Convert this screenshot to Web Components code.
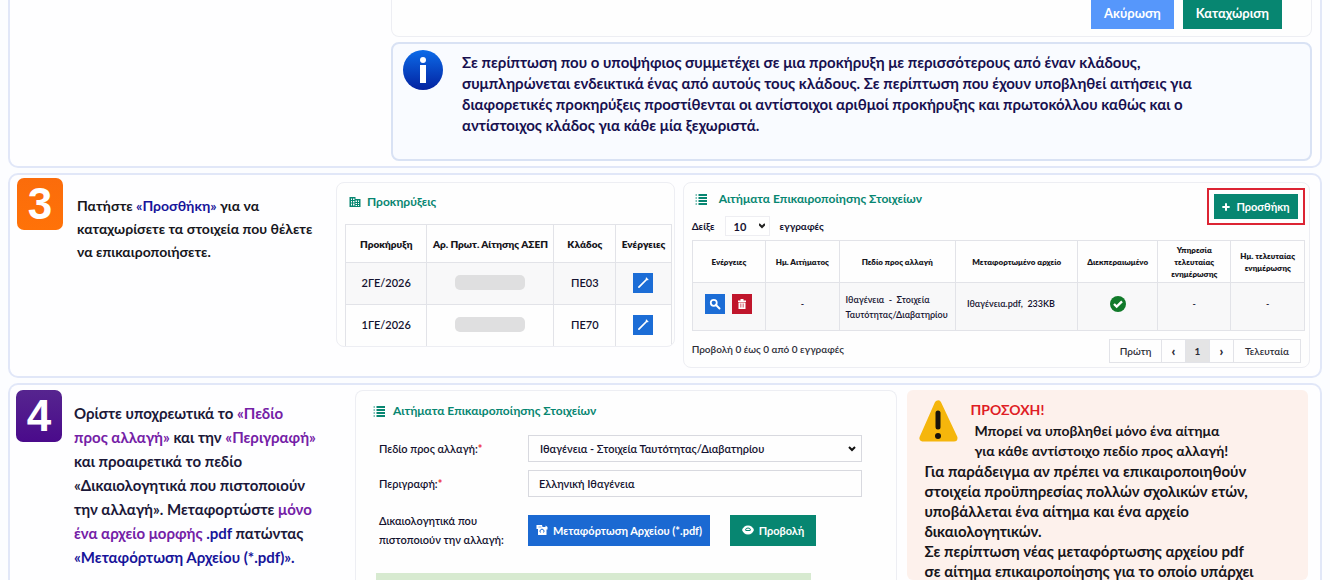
<!DOCTYPE html>
<html lang="el">
<head>
<meta charset="utf-8">
<meta name="viewport" content="width=device-width, initial-scale=1">
<title>Οδηγίες επικαιροποίησης στοιχείων</title>
<style>
  html, body { margin: 0; height: 100%; }
  body {
    overflow: hidden;
    background: #fcfdff;
    color: #14122f;
    font-family: Lato, "Noto Sans", sans-serif;
    font-size: 13px;
    --green: #078671;
    --blue: #1b69d2;
    --line: #e2e3e8;
  }
</style>
</head>
<body>
<guide-page></guide-page>

<script>
const base = `*, *::before { box-sizing: border-box; } svg { display: block; flex: none; }
button, input, select { font: inherit; color: inherit; margin: 0; }`;

const icons = {
  wand: '<path d="M5 19L18 6" stroke="currentColor" stroke-width="3" stroke-linecap="round" fill="none"/><path d="M17 3l4 4" stroke="currentColor" stroke-width="2"/>',
  search: '<circle cx="9.500" cy="9.500" r="6" fill="none" stroke="currentColor" stroke-width="3.500"/><path d="M14 14l7 7" stroke="currentColor" stroke-width="4" stroke-linecap="round"/>',
  trash: '<path d="M4 5h5V2h6v3h5v3H4zM5 9h14v13H5z" fill="currentColor"/><path d="M9 11v8M12 11v8M15 11v8" stroke="#c0162c" stroke-width="1"/>',
  plus: '<path d="M12 1v22M1 12h22" stroke="currentColor" stroke-width="6"/>',
  list: '<path d="M7 4h17M7 10h17M7 16h17M7 22h17" stroke="currentColor" stroke-width="4"/><path d="M1 4h3M1 10h3M1 16h3M1 22h3" stroke="currentColor" stroke-width="2"/>',
  building: '<path fill-rule="evenodd" fill="currentColor" d="M1 2h12v4h10v16H1zM4 5v3h2V5zm4 0v3h3V5zm-4 5v3h2v-3zm4 0v3h3v-3zm-4 5v4h2v-4zm4 0v4h3v-4zm5-6v3h3V9zm5 0v3h2V9zm-5 5v2h3v-2zm5 0v2h2v-2zm-5 4v2h3v-2zm5 0v2h2v-2z"/>',
  upload: '<path fill="currentColor" d="M1 2h11l1 4h6V3l4 3v5h-2v11H4V10H1z"/><path d="M9 17a4 4 0 1 1 6 0" fill="none" stroke="#1b69d2" stroke-width="2"/><path d="M5 6h6" stroke="#1b69d2" stroke-width="1"/>',
  eye: '<path fill="currentColor" d="M12 3C6 3 2 7 0 12c2 5 6 9 12 9s10-4 12-9c-2-5-6-9-12-9z"/><path d="M7 12a5 4 0 0 1 10 0" fill="none" stroke="#078671" stroke-width="2"/><path d="M7 13h10" stroke="#078671" stroke-width="2"/>',
  check: '<circle cx="12" cy="12" r="12" fill="#117a2a"/><path d="M6 12l4 4 8-8" fill="none" stroke="#fff" stroke-width="3.500"/>'
};
const icon = (name, size) => `<svg width="${size}" height="${size}" viewBox="0 0 24 24" aria-hidden="true">${icons[name]}</svg>`;

function element(name, css, html) {
  const template = document.createElement('template');
  template.innerHTML = `<style>${base}${css}</style>${html}`;
  customElements.define(name, class extends HTMLElement {
    constructor() {
      super();
      this.attachShadow({ mode: 'open' }).append(template.content.cloneNode(true));
    }
  });
}

/* A bordered section that holds one step of the guide */
element('step-panel', `
  :host { display: flex; background: #fefeff; border: 2px solid #e1e7f8; border-radius: 10px; box-sizing: border-box; }
`, `<slot></slot>`);

/* Coloured square with the step number */
element('step-badge', `
  :host { display: flex; flex: none; box-sizing: border-box; width: 46px; height: 52px; align-items: center; justify-content: center; border-radius: 7px;
    color: #fff; font: bold 44px/52px "Liberation Sans", sans-serif; background: var(--badge, linear-gradient(#fb6c0b, #ff7208)); }
`, `<slot></slot>`);

/* Step description */
element('step-text', `
  :host { display: block; flex: none; white-space: nowrap; font-weight: 700; font-size: 14px; }
`, `<slot></slot>`);

element('ui-card', `
  :host { display: flex; flex-direction: column; box-sizing: border-box; min-width: 0; background: #fefefe; border: 1px solid #edeef3; border-radius: 8px; }
`, `<slot></slot>`);

/* Card title with its icon */
customElements.define('card-title', class extends HTMLElement {
  constructor() {
    super();
    this.attachShadow({ mode: 'open' }).innerHTML = `<style>${base}
      :host { display: block; color: var(--green); }
      h2 { display: flex; align-items: center; gap: var(--title-gap, 8px); margin: 0; font-size: 12px; line-height: 16px; font-weight: 700; white-space: nowrap; }
    </style><h2>${icon(this.getAttribute('icon'), 12)}<slot></slot></h2>`;
  }
});

element('info-note', `
  :host { display: flex; gap: 18px; box-sizing: border-box; padding: 5px 9px; height: 119px; border: 2px solid #d9e2f4; border-radius: 8px; background: #f9fbff; color: #17104f; }
  p { margin: 3px 0 0; font-size: 15px; line-height: 21px; font-weight: 700; white-space: nowrap; }
`, `
  <svg width="42" height="42" viewBox="0 0 42 42" aria-hidden="true">
    <defs><linearGradient id="g" x1="0" y1="0" x2="0" y2="1"><stop offset="0" stop-color="#0c6be8"/><stop offset="1" stop-color="#0322a0"/></linearGradient></defs>
    <circle cx="21" cy="21" r="20" fill="url(#g)"/>
    <circle cx="21" cy="11" r="3" fill="#fff"/><path d="M18 16h6v18h-6z" fill="#fff"/>
  </svg>
  <p><slot></slot></p>`);

/* Buttons that close the form of the second step */
element('form-actions', `
  :host { display: flex; justify-content: flex-end; gap: 9px; }
  button { border: 0; height: 29px; padding: 0 13px 3px; color: #fff; font-size: 13px; font-weight: 700; background: var(--green); }
  .cancel { background: #5697fb; }
`, `<button type="button" class="cancel">Ακύρωση</button><button type="button">Καταχώριση</button>`);

const tableCss = `
  :host { display: block; }
  table { width: 100%; border-collapse: collapse; table-layout: fixed; text-align: center; }
  th, td { border: 1px solid var(--line); padding: 0; font-weight: 600; white-space: nowrap; }
  th { color: #17161c; font-weight: 800; }
  button { display: inline-flex; align-items: center; justify-content: center; width: 20px; height: 20px; padding: 0; border: 0; color: #fff; background: #1c6dd6; vertical-align: middle; }
`;

element('notices-table', tableCss + `
  table { font-size: 11px; }
  th { font-size: 10px; height: 38px; }
  td { height: 42px; padding-bottom: 2px; }
  tbody tr:first-child { background: #f8f8f9; }
  i { display: block; width: 70px; height: 15px; margin: 0 auto; border-radius: 5px; background: #dfdfe0; }
`, `
  <table>
    <colgroup><col style="width:25%"><col style="width:39%"><col style="width:19%"><col style="width:17%"></colgroup>
    <thead><tr><th>Προκήρυξη</th><th>Αρ. Πρωτ. Αίτησης ΑΣΕΠ</th><th>Κλάδος</th><th>Ενέργειες</th></tr></thead>
    <tbody>
      <tr><td>2ΓΕ/2026</td><td><i></i></td><td>ΠΕ03</td><td><button type="button" aria-label="Επεξεργασία">${icon('wand', 14)}</button></td></tr>
      <tr><td>1ΓΕ/2026</td><td><i></i></td><td>ΠΕ70</td><td><button type="button" aria-label="Επεξεργασία">${icon('wand', 14)}</button></td></tr>
    </tbody>
  </table>`);

element('requests-table', tableCss + `
  table { font-size: 9px; }
  th { height: 42px; font-size: 8px; line-height: 12px; }
  td { height: 48px; padding-bottom: 6px; line-height: 15px; background: #f8f8f9; }
  .left { text-align: left; padding: 0 0 0 6px; }
  .file { text-align: left; padding-left: 11px; white-space: pre; }
  .remove { background: #c0162c; margin-left: 7px; }
  svg { margin: 0 auto; }
`, `
  <table>
    <colgroup><col style="width:12%"><col style="width:12%"><col style="width:19%"><col style="width:20%"><col style="width:13%"><col style="width:12%"><col style="width:12%"></colgroup>
    <thead><tr><th>Ενέργειες</th><th>Ημ. Αιτήματος</th><th>Πεδίο προς αλλαγή</th><th>Μεταφορτωμένο αρχείο</th><th>Διεκπεραιωμένο</th><th>Υπηρεσία<br>τελευταίας<br>ενημέρωσης</th><th>Ημ. τελευταίας<br>ενημέρωσης</th></tr></thead>
    <tbody><tr>
      <td><button type="button" aria-label="Προβολή">${icon('search', 12)}</button><button type="button" class="remove" aria-label="Διαγραφή">${icon('trash', 12)}</button></td>
      <td>-</td><td class="left">Ιθαγένεια &nbsp;- &nbsp;Στοιχεία<br>Ταυτότητας/Διαβατηρίου</td><td class="file">Ιθαγένεια.pdf,  233KB</td>
      <td>${icon('check', 16)}</td><td>-</td><td>-</td>
    </tr></tbody>
  </table>`);

element('add-button', `
  :host { display: block; border: 2px solid #dc2433; padding: 4px 5px; }
  button { display: flex; align-items: center; justify-content: center; gap: 6px; width: 84px; height: 25px; padding: 0; border: 0; color: #fff; background: var(--green); font-size: 11px; font-weight: 700; }
`, `<button type="button">${icon('plus', 8)}Προσθήκη</button>`);

element('page-length', `
  :host { display: flex; align-items: center; font-size: 10px; font-weight: 700; }
  label { display: flex; align-items: center; gap: 10px; }
  .box { display: flex; align-items: center; position: relative; }
  select { appearance: none; width: 45px; height: 20px; padding: 0 8px; border: 1px solid #eeeef2; background: #fff; font-size: 11px; }
  svg { position: absolute; right: 5px; pointer-events: none; }
`, `<label>Δείξε <span class="box"><select><option>10</option></select><svg width="6" height="6" viewBox="0 0 6 6"><path d="M0 1l3 3 3-3" fill="none" stroke="#222" stroke-width="2"/></svg></span> εγγραφές</label>`);

element('page-nav', `
  :host { display: flex; align-items: flex-start; justify-content: space-between; font-size: 10px; font-weight: 600; color: #2c2c36; }
  span { line-height: 20px; }
  nav { display: flex; border: 1px solid var(--line); }
  button { display: flex; align-items: center; justify-content: center; width: 24px; height: 22px; padding: 0; border: 0; border-left: 1px solid var(--line); background: #fefefe; }
  button:first-child { width: 51px; border-left: 0; }
  button:last-child { width: 67px; }
  [aria-current] { background: #e4e4e5; font-weight: 700; }
  .arrow { font-size: 13px; font-weight: 800; }
`, `<span>Προβολή 0 έως 0 από 0 εγγραφές</span>
  <nav aria-label="Σελίδες"><button type="button">Πρώτη</button><button type="button" class="arrow">‹</button><button type="button" aria-current="page">1</button><button type="button" class="arrow">›</button><button type="button">Τελευταία</button></nav>`);

/* Form of the fourth step */
element('request-form', `
  :host { display: block; font-size: 11px; font-weight: 600; }
  form { display: grid; grid-template-columns: 149px 1fr; row-gap: 8px; align-items: center; }
  label, .label { line-height: 19px; white-space: nowrap; }
  b { color: #ee3544; }
  .box { position: relative; display: flex; align-items: center; }
  select, input { appearance: none; width: 100%; height: 27px; padding: 0 11px; border: 1px solid #d8d9df; border-radius: 0; background: #fefefe; }
  input { padding: 0 10px; }
  .box svg { position: absolute; right: 6px; pointer-events: none; }
  .buttons { display: flex; gap: 20px; margin-top: 6px; }
  .label { margin-top: 6px; }
  button { display: flex; align-items: center; justify-content: center; gap: 5px; width: 182px; height: 31px; padding: 0; border: 0; color: #fff; font-weight: 700; background: var(--blue); white-space: nowrap; }
  button.view { width: 86px; background: var(--green); }
`, `
  <form>
    <label for="field">Πεδίο προς αλλαγή:<b>*</b></label>
    <span class="box"><select id="field"><option>Ιθαγένεια - Στοιχεία Ταυτότητας/Διαβατηρίου</option></select><svg width="8" height="8" viewBox="0 0 8 8"><path d="M1 2l3 3 3-3" fill="none" stroke="#111" stroke-width="2"/></svg></span>
    <label for="text">Περιγραφή:<b>*</b></label>
    <input id="text" value="Ελληνική Ιθαγένεια">
    <span class="label">Δικαιολογητικά που<br>πιστοποιούν την αλλαγή:</span>
    <div class="buttons"><button type="button">${icon('upload', 12)}Μεταφόρτωση Αρχείου (*.pdf)</button><button type="button" class="view">${icon('eye', 12)}Προβολή</button></div>
  </form>`);

element('warning-note', `
  :host { display: block; box-sizing: border-box; padding: 9px 12px; background: #fdf1ec; border-radius: 6px; color: #17151a; font-weight: 700; line-height: 20px; white-space: nowrap; }
  header { display: flex; gap: 12px; font-size: 14px; }
  h3 { margin: 0; font-size: 14px; line-height: 22px; color: #df1d25; }
  p { margin: 0; }
  header p { padding-left: 4px; }
  .body { padding-left: 5px; font-size: 15px; }
`, `
  <header>
    <svg width="39" height="46" viewBox="0 0 39 46" aria-hidden="true"><path d="M19 5L4 39h31z" fill="#f5b60c" stroke="#f5b60c" stroke-width="7" stroke-linejoin="round"/><path d="M19 14v14" stroke="#17130b" stroke-width="5" stroke-linecap="round"/><circle cx="19" cy="37" r="3" fill="#17130b"/></svg>
    <div><h3>ΠΡΟΣΟΧΗ!</h3><p>Μπορεί να υποβληθεί μόνο ένα αίτημα<br>για κάθε αντίστοιχο πεδίο προς αλλαγή!</p></div>
  </header>
  <div class="body"><slot></slot></div>`);

element('guide-page', `
  :host { display: flex; flex-direction: column; gap: 5px; height: 100%; padding: 0 8px; box-sizing: border-box; }
  step-panel { flex: none; }
  .two { border-top: 0; border-radius: 0 0 10px 10px; padding: 0 8px 5px 381px; flex-direction: column; gap: 5px; }
  .two ui-card { height: 37px; border-top: 0; border-radius: 0 0 8px 8px; padding-right: 29px; }
  .three { height: 205px; padding: 3px 10px 8px 7px; align-items: flex-start; }
  .four { flex: 1; min-height: 0; overflow: hidden; padding: 5px 12px 0 6px; border-bottom: 0; border-radius: 10px 10px 0 0; align-items: stretch; }
  .three step-text { width: 259px; margin-left: 14px; padding-top: 16px; line-height: 23px; color: #17161c; }
  .four step-text { width: 281px; margin-left: 12px; padding-top: 11px; font-size: 15px; line-height: 24px; color: #1b1838; }
  .four step-badge { --badge: linear-gradient(#56258f, #4a0a8b); }
  .notices { flex: 339 1 339px; margin: 4px 8px 0 0; height: 165px; overflow: hidden; padding: 11px 2px 0 8px; }
  .notices notices-table { margin-top: 14px; }
  .notices card-title { --title-gap: 6px; padding-left: 4px; }
  .requests { flex: 628 1 628px; margin-top: 4px; height: 186px; padding: 0 4px 4px 8px; }
  .head { display: flex; justify-content: space-between; align-items: flex-start; height: 58px; }
  .head card-title { --title-gap: 12px; padding: 8px 0 9px 3px; }
  add-button { margin-top: 5px; }
  page-nav { margin: 8px 4px 0 0; }
  .form { flex: 543 1 543px; margin-right: 10px; padding: 12px 34px 0 17px; border-bottom: 0; border-radius: 8px 8px 0 0; }
  .form request-form { margin: 16px 0 24px 6px; }
  .bar { flex: none; height: 24px; margin: 0 51px 0 3px; background: #d7ead0; }
  warning-note { flex: 401 1 401px; }
  .navy { color: #17149a; }
  .violet { color: #7420a6; }
`, `
  <step-panel class="two">
    <ui-card><form-actions></form-actions></ui-card>
    <info-note>Σε περίπτωση που ο υποψήφιος συμμετέχει σε μια προκήρυξη με περισσότερους από έναν κλάδους,<br>συμπληρώνεται ενδεικτικά ένας από αυτούς τους κλάδους. Σε περίπτωση που έχουν υποβληθεί αιτήσεις για<br>διαφορετικές προκηρύξεις προστίθενται οι αντίστοιχοι αριθμοί προκήρυξης και πρωτοκόλλου καθώς και ο<br>αντίστοιχος κλάδος για κάθε μία ξεχωριστά.</info-note>
  </step-panel>
  <step-panel class="three">
    <step-badge>3</step-badge>
    <step-text>Πατήστε <span class="navy">«Προσθήκη»</span> για να<br>καταχωρίσετε τα στοιχεία που θέλετε<br>να επικαιροποιήσετε.</step-text>
    <ui-card class="notices"><card-title icon="building">Προκηρύξεις</card-title><notices-table></notices-table></ui-card>
    <ui-card class="requests">
      <div class="head"><div><card-title icon="list">Αιτήματα Επικαιροποίησης Στοιχείων</card-title><page-length></page-length></div><add-button></add-button></div>
      <requests-table></requests-table>
      <page-nav></page-nav>
    </ui-card>
  </step-panel>
  <step-panel class="four">
    <step-badge>4</step-badge>
    <step-text>Ορίστε υποχρεωτικά το <span class="violet">«Πεδίο<br>προς αλλαγή»</span> και την <span class="violet">«Περιγραφή»</span><br>και προαιρετικά το πεδίο<br>«Δικαιολογητικά που πιστοποιούν<br>την αλλαγή». Μεταφορτώστε <span class="violet">μόνο<br>ένα αρχείο μορφής</span> <span class="navy">.pdf</span> πατώντας<br><span class="navy">«Μεταφόρτωση Αρχείου (*.pdf)».</span></step-text>
    <ui-card class="form"><card-title icon="list">Αιτήματα Επικαιροποίησης Στοιχείων</card-title><request-form></request-form><div class="bar"></div></ui-card>
    <warning-note>Για παράδειγμα αν πρέπει να επικαιροποιηθούν<br>στοιχεία προϋπηρεσίας πολλών σχολικών ετών,<br>υποβάλλεται ένα αίτημα και ένα αρχείο<br>δικαιολογητικών.<br>Σε περίπτωση νέας μεταφόρτωσης αρχείου pdf<br>σε αίτημα επικαιροποίησης για το οποίο υπάρχει</warning-note>
  </step-panel>`);
</script>
</body>
</html>
